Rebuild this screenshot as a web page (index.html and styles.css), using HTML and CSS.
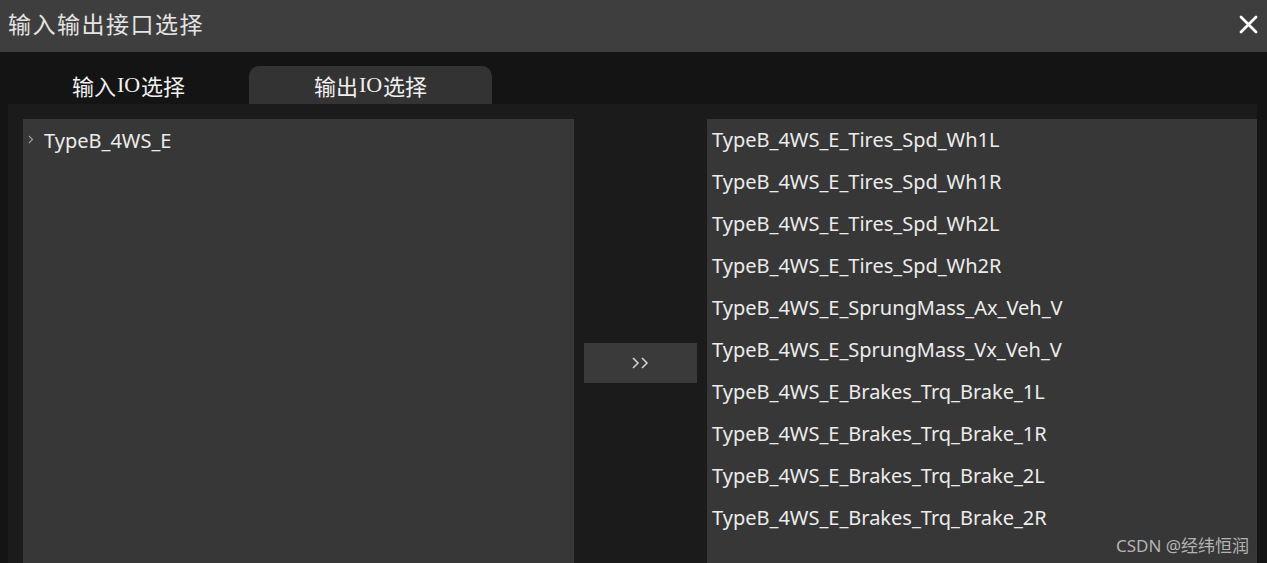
FILE: index.html
```html
<!DOCTYPE html>
<html lang="zh">
<head>
<meta charset="utf-8">
<link rel="stylesheet" href="styles.css">
</head>
<body>
<div class="window">
  <div class="titlebar">
    <span class="title">输入输出接口选择</span>
    <svg class="close" width="19" height="19" viewBox="0 0 19 19"><path d="M2 2 L17 17 M17 2 L2 17" stroke="#ffffff" stroke-width="2.8" stroke-linecap="round"/></svg>
  </div>
  <div class="tabs">
    <div class="tab">输入<span class="io">IO</span>选择</div>
    <div class="tab active">输出<span class="io">IO</span>选择</div>
  </div>
  <div class="content">
    <div class="panel left">
      <div class="tree-row">
        <svg class="chev" width="6" height="9" viewBox="0 0 6 9"><path d="M1 1 L4.5 4.5 L1 8" stroke="#9a9a9a" stroke-width="1.2" fill="none"/></svg>
        <span class="label">TypeB_4WS_E</span>
      </div>
    </div>
    <div class="middle">
      <div class="move-btn">
        <svg width="20" height="14" viewBox="0 0 20 14"><path d="M2 2 L7 7 L2 12 M11 2 L16 7 L11 12" stroke="#d0d0d0" stroke-width="1.6" fill="none"/></svg>
      </div>
    </div>
    <div class="panel right">
      <div class="item">TypeB_4WS_E_Tires_Spd_Wh1L</div>
      <div class="item">TypeB_4WS_E_Tires_Spd_Wh1R</div>
      <div class="item">TypeB_4WS_E_Tires_Spd_Wh2L</div>
      <div class="item">TypeB_4WS_E_Tires_Spd_Wh2R</div>
      <div class="item">TypeB_4WS_E_SprungMass_Ax_Veh_V</div>
      <div class="item">TypeB_4WS_E_SprungMass_Vx_Veh_V</div>
      <div class="item">TypeB_4WS_E_Brakes_Trq_Brake_1L</div>
      <div class="item">TypeB_4WS_E_Brakes_Trq_Brake_1R</div>
      <div class="item">TypeB_4WS_E_Brakes_Trq_Brake_2L</div>
      <div class="item">TypeB_4WS_E_Brakes_Trq_Brake_2R</div>
    </div>
  </div>
  <div class="watermark">CSDN @经纬恒润</div>
</div>
</body>
</html>
```
FILE: styles.css
```css
html, body {
  margin: 0;
  padding: 0;
  background: #141414;
}
body {
  font-family: "Noto Sans", "Noto Sans CJK SC", sans-serif;
  color: #ececec;
}
.window {
  position: relative;
  width: 1267px;
  height: 563px;
  overflow: hidden;
  display: flex;
  flex-direction: column;
}
.titlebar {
  height: 52px;
  flex: none;
  background: #3e3e3e;
  display: flex;
  align-items: center;
  justify-content: space-between;
  padding: 0 9px 0 8px;
  box-sizing: border-box;
}
.title {
  font-family: "Noto Sans CJK SC", sans-serif;
  font-size: 23px;
  color: #e4e4e4;
  letter-spacing: 1.5px;
  margin-top: -6px;
}
.close {
  display: block;
  margin-top: -4px;
}
.tabs {
  height: 52px;
  flex: none;
  display: flex;
  align-items: flex-end;
  padding-left: 8px;
  background: #141414;
}
.tab {
  width: 241px;
  height: 38px;
  display: flex;
  align-items: center;
  justify-content: center;
  font-family: "Noto Sans CJK SC", sans-serif;
  font-size: 22px;
  color: #f0f0f0;
  border-radius: 10px 10px 0 0;
}
.tab .io {
  font-family: "Liberation Serif", serif;
  font-size: 22px;
  margin: 0 1px;
}
.tab.active {
  width: 243px;
  background: #333333;
}
.content {
  flex: none;
  margin-left: 8px;
  width: 1249px;
  height: 503px;
  background: #1b1b1b;
  box-sizing: border-box;
  padding: 15px 0 0 15px;
  display: flex;
  align-items: flex-start;
}
.panel {
  height: 488px;
  background: #373737;
  flex: none;
}
.panel.left {
  width: 551px;
}
.panel.right {
  width: 550px;
  padding-left: 5px;
  box-sizing: border-box;
}
.middle {
  width: 133px;
  height: 488px;
  flex: none;
  display: flex;
  align-items: center;
  justify-content: center;
}
.move-btn {
  width: 113px;
  height: 40px;
  background: #3a3a3a;
  display: flex;
  align-items: center;
  justify-content: center;
}
.move-btn svg {
  display: block;
}
.tree-row {
  height: 42px;
  display: flex;
  align-items: center;
  padding-left: 5px;
}
.chev {
  display: block;
  margin-right: 10px;
  margin-top: -2px;
}
.label, .item {
  font-size: 20px;
  color: #ececec;
}
.item {
  height: 42px;
  line-height: 42px;
  white-space: nowrap;
}
.watermark {
  position: absolute;
  left: 1116px;
  top: 532px;
  font-family: "Noto Sans", "Noto Sans CJK SC", sans-serif;
  font-size: 17px;
  color: #b4b4b4;
  white-space: nowrap;
}
```
